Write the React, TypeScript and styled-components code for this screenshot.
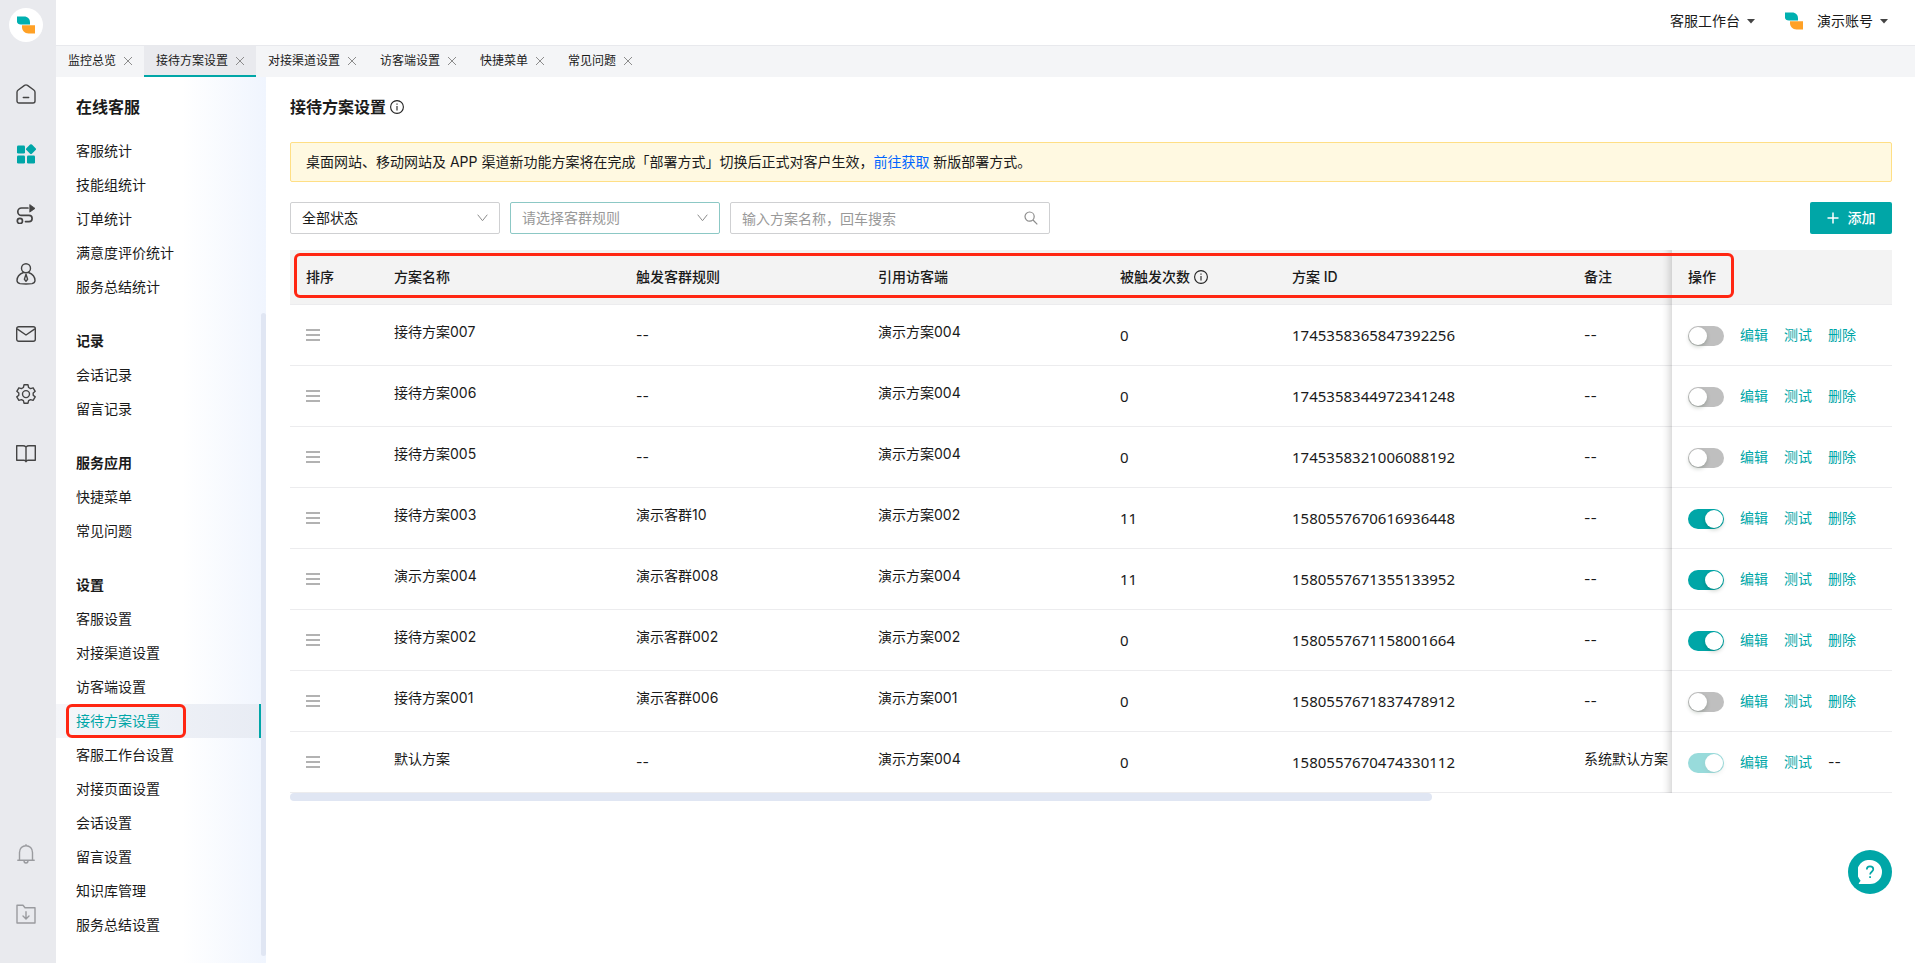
import React from 'react';
import styled, { createGlobalStyle, css } from 'styled-components';

const teal = '#00a6a7';
const red = '#ff2612';

const GlobalStyle = createGlobalStyle`
  *, *::before, *::after { box-sizing: border-box; }
  html, body, #root { height: 100%; }
  body {
    margin: 0;
    background: #fff;
    color: #1a1a1a;
    font-family: Inter, 'Noto Sans CJK SC', sans-serif;
    font-size: 14px;
    line-height: 22px;
  }
  button, input, select { font: inherit; color: inherit; }
  button { border: 0; padding: 0; background: none; cursor: pointer; }
  a { color: inherit; text-decoration: none; }
  svg { display: block; flex: none; }
`;

const Shell = styled.div`
  display: flex;
  min-height: 100%;
`;

const Rail = styled.nav`
  display: flex;
  flex-direction: column;
  align-items: center;
  width: 56px;
  flex: none;
  padding: 8px 4px 19px 0;
  background: #e9eaee;
  color: #444;
`;

const RailLogo = styled.a`
  display: grid;
  place-items: center;
  width: 34px;
  height: 34px;
  border-radius: 50%;
  background: #fff;
  margin-bottom: 22px;
`;

const RailButton = styled.button<{ $tone?: 'active' | 'muted' }>`
  display: grid;
  place-items: center;
  width: 52px;
  height: 60px;
  color: ${(p) => (p.$tone === 'active' ? teal : p.$tone === 'muted' ? '#9a9b9f' : '#444')};
`;

const RailSpacer = styled.div`
  flex: 1;
`;

const Page = styled.div`
  display: flex;
  flex-direction: column;
  flex: 1;
  min-width: 0;
`;

const TopBar = styled.header`
  display: flex;
  align-items: center;
  justify-content: flex-end;
  gap: 30px;
  height: 46px;
  padding: 0 27px 3px 0;
  border-bottom: 1px solid #e8e9ed;
`;

const AccountMenu = styled.button`
  display: flex;
  align-items: center;
  gap: 7px;
`;

const AccountLogo = styled.span`
  margin-right: 7px;
`;

const TabBar = styled.nav`
  display: flex;
  height: 31px;
  background: #f4f5f7;
`;

const Tab = styled.div<{ $active?: boolean }>`
  display: flex;
  align-items: center;
  gap: 8px;
  padding: 0 12px;
  font-size: 12px;
  line-height: 20px;
  border-bottom: 2px solid transparent;
  ${(p) => p.$active && css`
    background: #e9eaee;
    border-bottom-color: ${teal};
  `}
`;

const TabClose = styled.button`
  color: #8c8c8c;
`;

const Workspace = styled.div`
  display: flex;
  flex: 1;
`;

const SideBar = styled.aside`
  display: flex;
  width: 210px;
  flex: none;
  background: linear-gradient(90deg, #fff 60%, #f0f5fe);
`;

const SideMenu = styled.nav`
  flex: 1;
  padding-top: 18px;
`;

const SideTitle = styled.h2`
  margin: 0 0 15px;
  padding-left: 20px;
  font-size: 16px;
  line-height: 24px;
  font-weight: 600;
`;

const SideGroup = styled.section`
  & + & { margin-top: 20px; }
`;

const SideHeading = styled.h3`
  margin: 0;
  padding-left: 20px;
  font-size: 14px;
  line-height: 34px;
  font-weight: 700;
`;

const SideLink = styled.a<{ $active?: boolean }>`
  display: block;
  position: relative;
  padding-left: 20px;
  line-height: 34px;
  ${(p) => p.$active && css`
    color: ${teal};
    background: linear-gradient(90deg, #f5f6f9, #e8ecf4);
    border-right: 2px solid ${teal};
  `}
`;

const SideMark = styled.span`
  position: absolute;
  top: 0;
  left: 10px;
  width: 120px;
  height: 34px;
  border: 3px solid ${red};
  border-radius: 6px;
`;

const SideScroll = styled.div`
  display: flex;
  width: 5px;
  padding: 236px 0 7px;
`;

const SideThumb = styled.div`
  flex: 1;
  border-radius: 3px;
  background: #e0e6f3;
`;

const Content = styled.main`
  flex: 1;
  min-width: 0;
  padding: 18px 23px 24px 24px;
`;

const Heading = styled.h1`
  display: flex;
  align-items: center;
  gap: 4px;
  margin: 0 0 23px;
  font-size: 16px;
  line-height: 24px;
  font-weight: 600;
`;

const Notice = styled.p`
  margin: 0 0 20px;
  padding: 8px 15px;
  border: 1px solid #ffdf85;
  border-radius: 2px;
  background: #fff9e1;
`;

const NoticeLink = styled.a`
  color: #0065ff;
`;

const Filters = styled.div`
  display: flex;
  gap: 10px;
  margin-bottom: 16px;
`;

const Field = styled.label<{ $wide?: boolean }>`
  display: grid;
  align-items: center;
  width: ${(p) => (p.$wide ? 320 : 210)}px;
  & > * { grid-area: 1 / 1; }
  & > svg {
    justify-self: end;
    margin-right: 12px;
    color: #8c8c8c;
    pointer-events: none;
  }
`;

const control = css`
  width: 100%;
  height: 32px;
  padding: 0 11px;
  border: 1px solid #cfd0d2;
  border-radius: 2px;
  background: #fff;
  outline: none;
`;

const Select = styled.select<{ $focused?: boolean }>`
  ${control}
  appearance: none;
  ${(p) => p.$focused && css`
    border-color: #8cc8c5;
    color: #999;
  `}
`;

const SearchInput = styled.input`
  ${control}
  &::placeholder { color: #999; opacity: 1; }
`;

const AddButton = styled.button`
  display: flex;
  align-items: center;
  justify-content: center;
  gap: 9px;
  width: 82px;
  height: 32px;
  margin-left: auto;
  border-radius: 2px;
  background: ${teal};
  color: #fff;
  font-weight: 500;
`;

const TableArea = styled.div`
  position: relative;
`;

const TableView = styled.div`
  overflow: hidden;
`;

const Table = styled.table`
  width: 2247px;
  min-width: 100%;
  table-layout: fixed;
  border-collapse: separate;
  border-spacing: 0;
`;

const Col = styled.col<{ $w?: number }>`
  ${(p) => p.$w && css`width: ${p.$w}px;`}
`;

const cell = css<{ $pinned?: boolean }>`
  padding: 0 16px;
  text-align: left;
  white-space: nowrap;
  border-bottom: 1px solid #ececee;
  ${(p) => p.$pinned && css`
    position: sticky;
    right: 0;
    background: #fff;
    &::after {
      content: '';
      position: absolute;
      top: 0;
      bottom: -1px;
      left: -30px;
      width: 30px;
      box-shadow: inset -10px 0 8px -8px rgba(0, 0, 0, 0.2);
      pointer-events: none;
    }
  `}
`;

const Th = styled.th<{ $pinned?: boolean }>`
  ${cell}
  height: 55px;
  background: #f3f3f3;
  font-weight: 500;
`;

const Td = styled.td<{ $pinned?: boolean }>`
  ${cell}
  height: 61px;
`;

const NumberTd = styled(Td)`
  font-family: 'Noto Sans', sans-serif;
  font-size: 15px;
`;

const ThLabel = styled.span`
  display: flex;
  align-items: center;
  gap: 4px;
`;

const Ellipsis = styled.div`
  padding-bottom: 6px;
  overflow: hidden;
  text-overflow: ellipsis;
`;

const DragHandle = styled.button`
  display: block;
  color: #999;
`;

const Actions = styled.div`
  display: flex;
  align-items: center;
  gap: 16px;
`;

const Toggle = styled.input`
  appearance: none;
  display: flex;
  align-items: center;
  width: 36px;
  height: 20px;
  margin: 2px 0 0;
  padding: 1px;
  border-radius: 10px;
  background: #bfbfbf;
  &::before {
    content: '';
    width: 18px;
    height: 18px;
    border-radius: 50%;
    background: #fff;
    box-shadow: 0 2px 4px rgba(0, 35, 11, 0.2);
  }
  &:checked {
    justify-content: flex-end;
    background: ${teal};
  }
  &:disabled { opacity: 0.4; }
`;

const ActionLink = styled.a`
  color: ${teal};
`;

const TableThumb = styled.div`
  width: 71.3%;
  height: 8px;
  border-radius: 4px;
  background: #e0e6f3;
`;

const HeaderMark = styled.div`
  position: absolute;
  top: 3px;
  left: 4px;
  right: 158px;
  height: 45px;
  border: 3px solid ${red};
  border-radius: 6px;
  pointer-events: none;
`;

const HelpButton = styled.button`
  position: fixed;
  right: 23px;
  bottom: 69px;
  display: grid;
  place-items: center;
  width: 44px;
  height: 44px;
  border-radius: 50%;
  background: ${teal};
`;

const Brand = () => (
  <svg width="18" height="18" viewBox="0 0 18 18">
    <path d="M0 .5h7C10.800.5 13 3 13 6.500v2H4C1.500 8.500 0 7.500 0 5.500z" fill="#00b0b0" />
    <path d="M5 9.300h13v8.200h-6.500C7.500 17.500 5 14.500 5 11z" fill="#ffa126" />
  </svg>
);

const Caret = () => (
  <svg width="8" height="5" viewBox="0 0 8 5"><path d="M0 0h8L4 4.500z" fill="#444" /></svg>
);

const CloseIcon = () => (
  <svg width="8" height="8" viewBox="0 0 8 8" stroke="currentColor" fill="none"><path d="M0 0l8 8M8 0L0 8" /></svg>
);

const Chevron = () => (
  <svg width="11" height="8" viewBox="0 0 11 8" stroke="currentColor" fill="none"><path d="M.7.7l4.800 6L10.300.7" /></svg>
);

const InfoIcon = () => (
  <svg width="14" height="14" viewBox="0 0 14 14" fill="none" stroke="#222" strokeWidth="1.100">
    <circle cx="7" cy="7" r="6.400" />
    <path d="M7 6v4.500M7 3.500v1.200" />
  </svg>
);

const line = { fill: 'none', stroke: 'currentColor', strokeWidth: 1.4, strokeLinejoin: 'round', strokeLinecap: 'round' } as const;

const HomeIcon = () => (
  <svg width="20" height="20" viewBox="0 0 20 20" {...line}>
    <path d="M1 8.300c0-1 .4-1.700 1.200-2.300l6.300-4.600c.9-.6 2.100-.6 3 0L17.800 6c.8.6 1.200 1.300 1.200 2.300V17a2 2 0 0 1-2 2H3a2 2 0 0 1-2-2z" />
    <path d="M7.300 13.500h5.400" />
  </svg>
);
const GridIcon = () => (
  <svg width="20" height="20" viewBox="0 0 20 20" fill="currentColor">
    <rect x="1" y="1.500" width="8" height="8" rx="1.300" />
    <rect x="1" y="11.500" width="8" height="8" rx="1.300" />
    <rect x="11" y="11.500" width="8" height="8" rx="1.300" />
    <rect x="11.100" y="1.300" width="7.800" height="7.800" rx="1.300" transform="rotate(45 15 5.200)" />
  </svg>
);
const RouteIcon = () => (
  <svg width="20" height="20" viewBox="0 0 20 20" {...line} strokeWidth={1.7}>
    <path d="M12 4H5.500a3.700 3.700 0 0 0 0 7.400H13a3.100 3.100 0 0 1 0 6.200H9.500" />
    <circle cx="3.900" cy="17" r="2.600" />
    <path d="M14 .8l5 3.600-5 3.500z" fill="currentColor" strokeWidth={0.8} />
  </svg>
);
const AgentIcon = () => (
  <svg width="20" height="22" viewBox="0 0 20 22" {...line}>
    <circle cx="10" cy="5.300" r="4.500" />
    <path d="M7.500 9.500C3.500 11 1 14 1 17.600c0 2 1 2.600 3 3 4 .6 8 .6 12 0 2-.4 3-1 3-3 0-3.600-2.500-6.600-6.500-8.100" />
    <path d="M10 11.200l-1.600 5L10 18.200l1.600-2z" />
  </svg>
);
const MailIcon = () => (
  <svg width="20" height="16" viewBox="0 0 20 16" {...line}>
    <rect x=".7" y=".7" width="18.600" height="14.600" rx="2" />
    <path d="M1.500 3.200L10 9l8.500-5.800" />
  </svg>
);
const GearIcon = () => (
  <svg width="20" height="20" viewBox="0 0 20 20" {...line}>
    <path d="M8 .8h4l.6 2.700 1.900 1.100 2.600-.8 2.100 3.500-2 1.700v2.200l2 1.700-2.100 3.500-2.600-.8-1.900 1.100-.6 2.500H8l-.6-2.500-1.900-1.100-2.600.8L.8 12.900l2-1.700V9l-2-1.700 2.100-3.500 2.600.8 1.900-1.100z" />
    <circle cx="10" cy="10.100" r="3.500" />
  </svg>
);
const BookIcon = () => (
  <svg width="20" height="18" viewBox="0 0 20 18" {...line}>
    <path d="M10 2C9 1 8 .8 7 .8H.7v14.400H8c1 0 1.600.5 2 1.500.4-1 1-1.500 2-1.500h7.300V.8H13c-1 0-2 .2-3 1.200zM10 2v14" />
  </svg>
);
const BellIcon = () => (
  <svg width="18" height="20" viewBox="0 0 18 20" {...line}>
    <path d="M.8 16.200h16.400M2.500 16V8.500C2.500 4.500 5.300 1.700 9 1.700s6.500 2.800 6.500 6.800V16M7 16.500c0 1.600.8 2.500 2 2.500s2-.9 2-2.500M9 .7v1" />
  </svg>
);
const FolderIcon = () => (
  <svg width="20" height="20" viewBox="0 0 20 20" {...line}>
    <path d="M1 1.200h6l2 2.600h10V19H1zM10 7.800v7M7 12l3 3 3-3" />
  </svg>
);

const DragIcon = () => (
  <svg width="14" height="12" viewBox="0 0 14 12" stroke="currentColor" strokeWidth="1.500">
    <path d="M0 1h14M0 6h14M0 11h14" />
  </svg>
);

const SearchIcon = () => (
  <svg width="14" height="14" viewBox="0 0 14 14" fill="none" stroke="currentColor" strokeWidth="1.200">
    <circle cx="5.600" cy="5.600" r="4.600" />
    <path d="M9 9l4.300 4.300" />
  </svg>
);

const PlusIcon = () => (
  <svg width="12" height="12" viewBox="0 0 12 12" stroke="currentColor" strokeWidth="1.500"><path d="M6 .5v11M.5 6h11" /></svg>
);

const HelpIcon = () => (
  <svg width="24" height="24" viewBox="0 0 24 24">
    <path d="M12 0a12 12 0 0 1 0 24H1.200c-.5 0-.5-.4-.2-.9l1.600-2.400-1.400-2A12 12 0 0 1 12 0z" fill="#fff" />
    <path d="M8.800 9.500c0-2 1.400-3.100 3.200-3.100 1.900 0 3.300 1.100 3.300 2.900 0 2.400-3.200 2.500-3.200 5.100M12.100 16.200v1.900" fill="none" stroke={teal} strokeWidth="1.700" />
  </svg>
);

const tabs = ['监控总览', '接待方案设置', '对接渠道设置', '访客端设置', '快捷菜单', '常见问题'];
const current = '接待方案设置';

const menu: { heading?: string; items: string[] }[] = [
  { items: ['客服统计', '技能组统计', '订单统计', '满意度评价统计', '服务总结统计'] },
  { heading: '记录', items: ['会话记录', '留言记录'] },
  { heading: '服务应用', items: ['快捷菜单', '常见问题'] },
  {
    heading: '设置',
    items: ['客服设置', '对接渠道设置', '访客端设置', '接待方案设置', '客服工作台设置', '对接页面设置', '会话设置', '留言设置', '知识库管理', '服务总结设置'],
  },
];

interface Plan {
  name: string;
  rule?: string;
  client: string;
  count: number;
  id: string;
  note?: string;
  on: boolean;
  locked?: boolean;
}

const plans: Plan[] = [
  { name: '接待方案007', client: '演示方案004', count: 0, id: '1745358365847392256', on: false },
  { name: '接待方案006', client: '演示方案004', count: 0, id: '1745358344972341248', on: false },
  { name: '接待方案005', client: '演示方案004', count: 0, id: '1745358321006088192', on: false },
  { name: '接待方案003', rule: '演示客群10', client: '演示方案002', count: 11, id: '1580557670616936448', on: true },
  { name: '演示方案004', rule: '演示客群008', client: '演示方案004', count: 11, id: '1580557671355133952', on: true },
  { name: '接待方案002', rule: '演示客群002', client: '演示方案002', count: 0, id: '1580557671158001664', on: true },
  { name: '接待方案001', rule: '演示客群006', client: '演示方案001', count: 0, id: '1580557671837478912', on: false },
  { name: '默认方案', client: '演示方案004', count: 0, id: '1580557670474330112', note: '系统默认方案', on: true, locked: true },
];

const TextCell = ({ value }: { value?: string }) => <Td>{value ? <Ellipsis>{value}</Ellipsis> : '--'}</Td>;

const PlanRow = ({ plan }: { plan: Plan }) => (
  <tr>
    <Td><DragHandle aria-label="拖动排序"><DragIcon /></DragHandle></Td>
    <TextCell value={plan.name} />
    <TextCell value={plan.rule} />
    <TextCell value={plan.client} />
    <NumberTd>{plan.count}</NumberTd>
    <NumberTd>{plan.id}</NumberTd>
    <TextCell value={plan.note} />
    <Td $pinned>
      <Actions>
        <Toggle type="checkbox" role="switch" aria-label={`启用${plan.name}`} defaultChecked={plan.on} disabled={plan.locked} />
        <ActionLink href="#edit">编辑</ActionLink>
        <ActionLink href="#test">测试</ActionLink>
        {plan.locked ? <span>--</span> : <ActionLink href="#delete">删除</ActionLink>}
      </Actions>
    </Td>
  </tr>
);

export default function App() {
  return (
    <>
      <GlobalStyle />
      <Shell>
        <Rail aria-label="主导航">
          <RailLogo href="#home" aria-label="首页"><Brand /></RailLogo>
          <RailButton aria-label="工作台"><HomeIcon /></RailButton>
          <RailButton aria-label="应用" $tone="active"><GridIcon /></RailButton>
          <RailButton aria-label="流程"><RouteIcon /></RailButton>
          <RailButton aria-label="客服"><AgentIcon /></RailButton>
          <RailButton aria-label="邮件"><MailIcon /></RailButton>
          <RailButton aria-label="设置"><GearIcon /></RailButton>
          <RailButton aria-label="知识库"><BookIcon /></RailButton>
          <RailSpacer />
          <RailButton aria-label="通知" $tone="muted"><BellIcon /></RailButton>
          <RailButton aria-label="下载" $tone="muted"><FolderIcon /></RailButton>
        </Rail>
        <Page>
          <TopBar>
            <AccountMenu>客服工作台<Caret /></AccountMenu>
            <AccountMenu><AccountLogo><Brand /></AccountLogo>演示账号<Caret /></AccountMenu>
          </TopBar>
          <TabBar>
            {tabs.map((t) => (
              <Tab key={t} $active={t === current}>
                <a href="#tab">{t}</a>
                <TabClose aria-label={`关闭${t}`}><CloseIcon /></TabClose>
              </Tab>
            ))}
          </TabBar>
          <Workspace>
            <SideBar>
              <SideMenu>
                <SideTitle>在线客服</SideTitle>
                {menu.map((g, i) => (
                  <SideGroup key={i}>
                    {g.heading && <SideHeading>{g.heading}</SideHeading>}
                    {g.items.map((item) => (
                      <SideLink key={item} href="#menu" $active={item === current}>
                        {item}
                        {item === current && <SideMark />}
                      </SideLink>
                    ))}
                  </SideGroup>
                ))}
              </SideMenu>
              <SideScroll><SideThumb /></SideScroll>
            </SideBar>
            <Content>
              <Heading>接待方案设置<InfoIcon /></Heading>
              <Notice>
                桌面网站、移动网站及 APP 渠道新功能方案将在完成「部署方式」切换后正式对客户生效，
                <NoticeLink href="#deploy">前往获取</NoticeLink> 新版部署方式。
              </Notice>
              <Filters>
                <Field>
                  <Select aria-label="状态"><option>全部状态</option></Select>
                  <Chevron />
                </Field>
                <Field>
                  <Select aria-label="客群规则" $focused><option>请选择客群规则</option></Select>
                  <Chevron />
                </Field>
                <Field $wide>
                  <SearchInput type="text" aria-label="搜索方案" placeholder="输入方案名称，回车搜索" />
                  <SearchIcon />
                </Field>
                <AddButton><PlusIcon />添加</AddButton>
              </Filters>
              <TableArea>
                <TableView>
                  <Table>
                    <colgroup>
                      <Col $w={88} />
                      <Col $w={242} />
                      <Col $w={242} />
                      <Col $w={242} />
                      <Col $w={172} />
                      <Col $w={292} />
                      <Col />
                      <Col $w={220} />
                    </colgroup>
                    <thead>
                      <tr>
                        <Th>排序</Th>
                        <Th>方案名称</Th>
                        <Th>触发客群规则</Th>
                        <Th>引用访客端</Th>
                        <Th><ThLabel>被触发次数<InfoIcon /></ThLabel></Th>
                        <Th>方案 ID</Th>
                        <Th>备注</Th>
                        <PinnedHead>操作</PinnedHead>
                      </tr>
                    </thead>
                    <tbody>
                      {plans.map((p) => <PlanRow key={p.id} plan={p} />)}
                    </tbody>
                  </Table>
                </TableView>
                <TableThumb />
                <HeaderMark />
              </TableArea>
            </Content>
          </Workspace>
        </Page>
        <HelpButton aria-label="帮助"><HelpIcon /></HelpButton>
      </Shell>
    </>
  );
}

const PinnedHead = styled(Th).attrs({ $pinned: true })`
  background: #f3f3f3;
`;
